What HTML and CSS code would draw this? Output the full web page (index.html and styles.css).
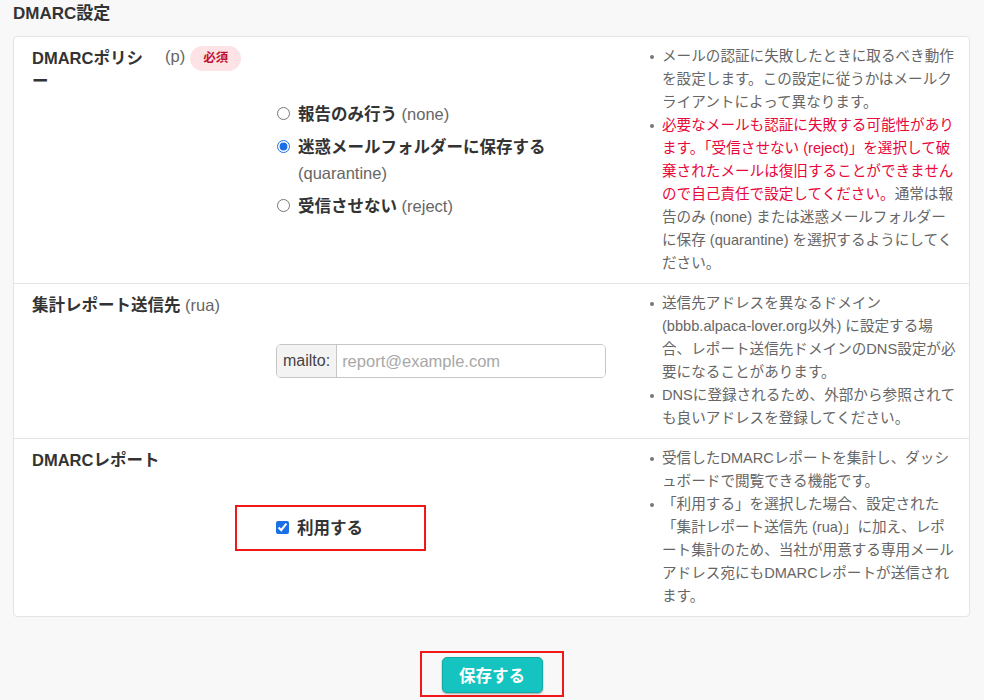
FILE: index.html
```html
<!DOCTYPE html>
<html lang="ja">
<head>
  <meta charset="UTF-8">
  <title>DMARC設定</title>
  <meta name="viewport" content="width=device-width, initial-scale=1.0">
  <link rel="stylesheet" href="styles.css">
</head>
<body>
  <div class="page">
    <h2 class="section-title">DMARC設定</h2>

    <div class="card">
      <!-- DMARC policy -->
      <div class="field-row">
        <div class="field-label">
          <span class="field-name field-name-narrow">DMARCポリシー</span>
          <span class="field-key">(p)</span>
          <span class="badge-required">必須</span>
        </div>
        <div class="field-control">
          <div class="radio-list">
            <label class="option">
              <input type="radio" name="policy" value="none">
              <span class="option-text">報告のみ行う <span class="option-sub">(none)</span></span>
            </label>
            <label class="option">
              <input type="radio" name="policy" value="quarantine" checked>
              <span class="option-text">迷惑メールフォルダーに保存する <span class="option-sub">(quarantine)</span></span>
            </label>
            <label class="option">
              <input type="radio" name="policy" value="reject">
              <span class="option-text">受信させない <span class="option-sub">(reject)</span></span>
            </label>
          </div>
        </div>
        <div class="field-help">
          <ul>
            <li>メールの認証に失敗したときに取るべき動作を設定します。この設定に従うかはメールクライアントによって異なります。</li>
            <li><span class="warn">必要なメールも認証に失敗する可能性があります。「受信させない (reject)」を選択して破棄されたメールは復旧することができませんので自己責任で設定してください。</span>通常は報告のみ (none) または迷惑メールフォルダーに保存 (quarantine) を選択するようにしてください。</li>
          </ul>
        </div>
      </div>

      <!-- rua -->
      <div class="field-row">
        <div class="field-label">
          <span class="field-name">集計レポート送信先 <span class="field-key">(rua)</span></span>
        </div>
        <div class="field-control">
          <div class="input-group">
            <span class="input-prefix">mailto:</span>
            <input type="text" placeholder="report@example.com">
          </div>
        </div>
        <div class="field-help">
          <ul>
            <li>送信先アドレスを異なるドメイン (bbbb.alpaca-lover.org以外) に設定する場合、レポート送信先ドメインのDNS設定が必要になることがあります。</li>
            <li>DNSに登録されるため、外部から参照されても良いアドレスを登録してください。</li>
          </ul>
        </div>
      </div>

      <!-- report -->
      <div class="field-row">
        <div class="field-label">
          <span class="field-name">DMARCレポート</span>
        </div>
        <div class="field-control">
          <div class="highlight">
            <label class="option option-check">
              <input type="checkbox" checked>
              <span class="option-text">利用する</span>
            </label>
          </div>
        </div>
        <div class="field-help">
          <ul>
            <li>受信したDMARCレポートを集計し、ダッシュボードで閲覧できる機能です。</li>
            <li>「利用する」を選択した場合、設定された「集計レポート送信先 (rua)」に加え、レポート集計のため、当社が用意する専用メールアドレス宛にもDMARCレポートが送信されます。</li>
          </ul>
        </div>
      </div>
    </div>

    <div class="actions">
      <div class="highlight highlight-btn">
        <button class="btn-save">保存する</button>
      </div>
    </div>
  </div>
</body>
</html>
```

FILE: styles.css
```css
:root {
  --bg: #f8f8f8;
  --card-bg: #ffffff;
  --border: #e4e4e4;
  --text: #333333;
  --text-muted: #666666;
  --warn: #e8063a;
  --accent: #1a6fe6;
  --teal: #15c4c0;
  --mark: #f01818;
}

* {
  box-sizing: border-box;
}

body {
  margin: 0;
  padding: 0;
  background: var(--bg);
  color: var(--text);
  font-family: "Liberation Sans", "Noto Sans CJK JP", sans-serif;
}

.page {
  padding: 2px 14px 0 13px;
}

.section-title {
  margin: 0 0 10px;
  font-size: 17px;
  line-height: 24px;
  font-weight: 700;
  color: var(--text);
}

.card {
  background: var(--card-bg);
  border: 1px solid var(--border);
  border-radius: 4px;
}

.field-row {
  display: grid;
  grid-template-columns: 244px 330px 1fr;
  padding: 8px 12px 8px 18px;
  border-top: 1px solid var(--border);
}

.field-row:first-child {
  border-top: none;
}

.field-label {
  display: flex;
  align-items: flex-start;
  padding-top: 2px;
}

.field-name {
  font-size: 16.5px;
  line-height: 23px;
  font-weight: 700;
  color: var(--text);
}

.field-name-narrow {
  width: 116px;
  margin-right: 17px;
}

.field-key {
  font-size: 16.5px;
  font-weight: 400;
  color: var(--text-muted);
  line-height: 19px;
}

.field-label > .field-key {
  margin-right: 5px;
}

.badge-required {
  display: inline-block;
  margin-top: -1px;
  padding: 0 13px;
  height: 25px;
  line-height: 25px;
  border-radius: 13px;
  background: #fde2e6;
  color: #c01030;
  font-size: 12.5px;
  font-weight: 700;
}

.field-control {
  align-self: center;
}

.radio-list {
  display: flex;
  flex-direction: column;
  gap: 7px;
}

.option {
  display: flex;
  align-items: flex-start;
  gap: 8px;
  cursor: pointer;
}

.option input {
  margin: 6px 0 0 1px;
  width: 13px;
  height: 13px;
  flex-shrink: 0;
  accent-color: var(--accent);
}

.option-text {
  font-size: 16.5px;
  line-height: 26px;
  font-weight: 700;
  color: var(--text);
}

.option-sub {
  font-size: 16.5px;
  font-weight: 400;
  color: var(--text-muted);
}

.input-group {
  display: flex;
  width: 100%;
  height: 34px;
  border: 1px solid #c6c6c6;
  border-radius: 5px;
  overflow: hidden;
  background: #fff;
}

.input-prefix {
  padding: 0 6px;
  line-height: 32px;
  background: #f3f3f3;
  border-right: 1px solid #c6c6c6;
  font-size: 16px;
  color: #444;
}

.input-group input {
  flex: 1;
  min-width: 0;
  border: none;
  outline: none;
  padding: 0 5px;
  font-family: inherit;
  font-size: 16.5px;
  color: var(--text);
}

.input-group input::placeholder {
  color: #a8a8a8;
}

.field-help {
  padding-left: 42px;
}

.field-help ul {
  margin: 0;
  padding: 0 0 0 14px;
  list-style: none;
}

.field-help li {
  position: relative;
  font-size: 14.6px;
  line-height: 23px;
  color: var(--text-muted);
}

.field-help li::before {
  content: "";
  position: absolute;
  left: -12px;
  top: 10px;
  width: 4px;
  height: 4px;
  border-radius: 50%;
  background: #777;
}

.warn {
  color: var(--warn);
}

.highlight {
  display: inline-flex;
  align-items: center;
  border: 2px solid var(--mark);
}

.field-control .highlight {
  margin-left: -41px;
  padding: 8px 61px 8px 38px;
}

.option-check input {
  margin-top: 6px;
}

.actions {
  display: flex;
  justify-content: center;
  margin-top: 34px;
}

.highlight-btn {
  padding: 4px 19px 2px 20px;
}

.btn-save {
  width: 101px;
  height: 36px;
  border: 1px solid #10a9a5;
  border-radius: 5px;
  background: var(--teal);
  color: #fff;
  font-family: inherit;
  font-size: 16.5px;
  font-weight: 700;
  box-shadow: 0 1px 2px rgba(0, 0, 0, 0.35);
  cursor: pointer;
}
```
